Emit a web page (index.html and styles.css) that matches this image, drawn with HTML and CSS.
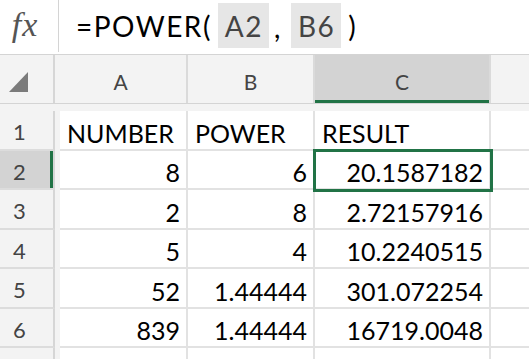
FILE: index.html
```html
<!DOCTYPE html>
<html>
<head>
<meta charset="utf-8">
<link rel="stylesheet" href="styles.css">
</head>
<body>
<div class="sheet">
  <div class="fbar">
    <div class="fx">fx</div>
    <div class="formula">
      <span class="ftxt">=POWER(</span>
      <span class="ref">A2</span>
      <span class="ftxt comma">,</span>
      <span class="ref">B6</span>
      <span class="ftxt paren">)</span>
    </div>
  </div>
  <div class="colheads">
    <div class="corner"><svg width="19" height="20" viewBox="0 0 19 20"><polygon points="19,0 19,20 0,20" fill="#7b7b7b"/></svg></div>
    <div class="ch cha">A</div>
    <div class="ch chb">B</div>
    <div class="ch chc sel">C</div>
    <div class="ch chd"></div>
  </div>
  <div class="band"></div>
  <div class="rows">
    <div class="row"><div class="rh">1</div><div class="gap"></div><div class="c ca l">NUMBER</div><div class="c cb l">POWER</div><div class="c cc l">RESULT</div><div class="c cd"></div></div>
    <div class="row"><div class="rh sel">2</div><div class="gap"></div><div class="c ca">8</div><div class="c cb">6</div><div class="c cc active">20.1587182</div><div class="c cd"></div></div>
    <div class="row"><div class="rh">3</div><div class="gap"></div><div class="c ca">2</div><div class="c cb">8</div><div class="c cc">2.72157916</div><div class="c cd"></div></div>
    <div class="row"><div class="rh">4</div><div class="gap"></div><div class="c ca">5</div><div class="c cb">4</div><div class="c cc">10.2240515</div><div class="c cd"></div></div>
    <div class="row"><div class="rh">5</div><div class="gap"></div><div class="c ca">52</div><div class="c cb">1.44444</div><div class="c cc">301.072254</div><div class="c cd"></div></div>
    <div class="row"><div class="rh">6</div><div class="gap"></div><div class="c ca">839</div><div class="c cb">1.44444</div><div class="c cc">16719.0048</div><div class="c cd"></div></div>
    <div class="row"><div class="rh"></div><div class="gap"></div><div class="c ca"></div><div class="c cb"></div><div class="c cc"></div><div class="c cd"></div></div>
  </div>
</div>
</body>
</html>
```
FILE: styles.css
```css
html, body {
  margin: 0;
  padding: 0;
  background: #fff;
  overflow: hidden;
}
.sheet {
  width: 529px;
  height: 359px;
  overflow: hidden;
  font-family: Lato, "Open Sans", sans-serif;
  color: #000;
}
.fbar {
  display: flex;
  height: 54px;
  border-bottom: 1px solid #d4d4d4;
  background: #fff;
}
.fx {
  width: 59px;
  height: 52px;
  border-right: 1px solid #d4d4d4;
  display: flex;
  align-items: center;
  justify-content: center;
  font-family: "Liberation Serif", serif;
  font-style: italic;
  font-size: 34px;
  letter-spacing: 1px;
  color: #555;
  padding-right: 8px;
  padding-bottom: 2px;
  box-sizing: border-box;
}
.formula {
  display: flex;
  align-items: center;
  padding-left: 17px;
  font-size: 28px;
  letter-spacing: 1.5px;
  height: 54px;
}
.ftxt {
  line-height: 34px;
  margin-bottom: 2px;
}
.ref {
  align-self: flex-start;
  margin-top: 3px;
  height: 45px;
  display: flex;
  align-items: center;
  padding: 0 6px 0 7px;
  background: #e6e6e6;
  color: #444;
  margin-left: 6px;
}
.comma {
  margin: 0 3px 0 5px;
}
.paren {
  margin-left: 7px;
}
.colheads {
  display: flex;
  height: 48px;
  border-bottom: 1px solid #d4d4d4;
  background: #f3f3f3;
}
.corner {
  width: 55px;
  box-sizing: border-box;
  border-right: 2px solid #d6d6d6;
  display: flex;
  align-items: flex-end;
  justify-content: flex-end;
  padding-right: 25px;
  padding-bottom: 11px;
}
.corner svg {
  display: block;
}
.ch {
  box-sizing: border-box;
  border-right: 2px solid #dadada;
  display: flex;
  align-items: flex-end;
  justify-content: center;
  padding-bottom: 9px;
  font-size: 21px;
  color: #444;
}
.cha { width: 133px; }
.chb { width: 127px; }
.chc { width: 176px; }
.chd { flex: 1; border-right: none; }
.ch.sel {
  background: #d3d3d3;
  box-shadow: inset 0 -3px 0 #217346;
}
.band {
  height: 7px;
  background: #f3f3f3;
}
.rows {
  display: flex;
  flex-direction: column;
}
.row {
  display: flex;
  height: 39.5px;
  flex: none;
}
.rh {
  width: 55px;
  box-sizing: border-box;
  background: #f3f3f3;
  border-right: 2px solid #d6d6d6;
  border-bottom: 2px solid #dcdcdc;
  display: flex;
  align-items: flex-end;
  padding-left: 13px;
  padding-bottom: 3px;
  font-size: 22px;
  color: #444;
  line-height: 1.2;
}
.rh.sel {
  background: #d3d3d3;
  box-shadow: inset -3px 0 0 #217346;
}
.gap {
  width: 5px;
  background: #f3f3f3;
  flex: none;
}
.c {
  box-sizing: border-box;
  border-right: 2px solid #e2e2e2;
  border-bottom: 2px solid #e2e2e2;
  display: flex;
  align-items: flex-end;
  justify-content: flex-end;
  padding: 0 6px 1px 6px;
  font-size: 25px;
  line-height: 1.2;
  white-space: nowrap;
}
.c.l {
  justify-content: flex-start;
  padding-left: 7px;
}
.ca { width: 128px; }
.cb { width: 127px; }
.cc { width: 176px; }
.cd { flex: 1; border-right: none; }
.c.active {
  outline: 3px solid #217346;
  outline-offset: -1px;
  position: relative;
}
```
